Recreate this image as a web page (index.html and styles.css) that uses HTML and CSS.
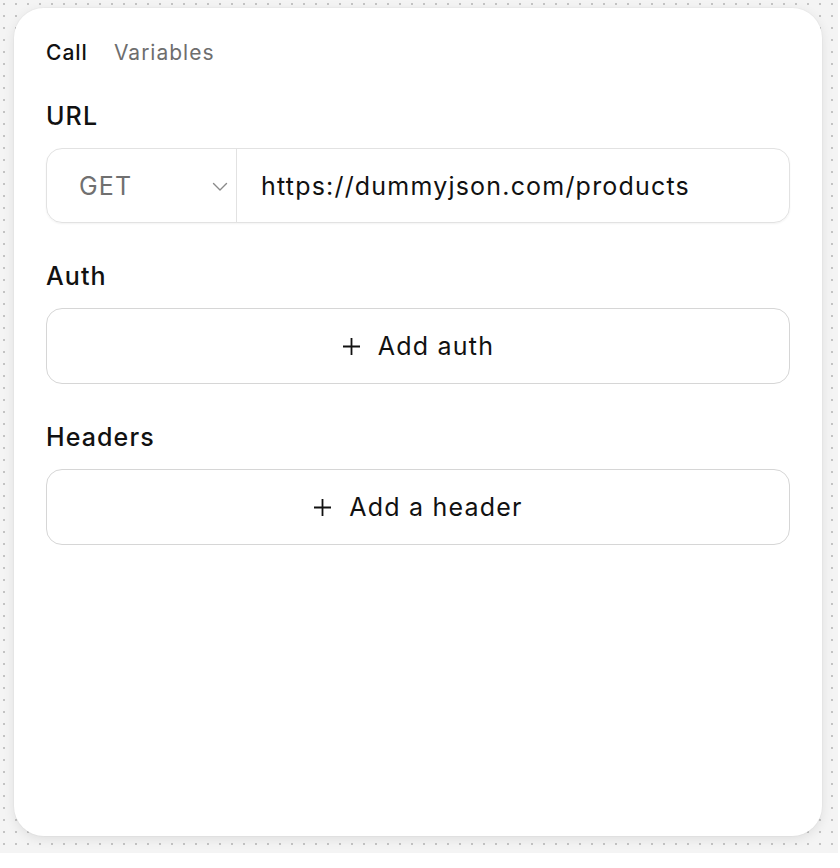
FILE: index.html
```html
<!doctype html>
<html>
<head>
  <title>Request</title>
  <link rel="stylesheet" href="styles.css">
</head>
<body>
<div class="canvas">
	<div class="panel">

		<nav class="tabs">
			<span class="tab tab-active">Call</span>
			<span class="tab">Variables</span>
		</nav>

		<section class="field">
			<div class="field-label">URL</div>
			<div class="url-group">
				<div class="method">
					<span>GET</span>
					<svg class="chevron" width="16" height="10" viewBox="0 0 16 10">
						<path d="M1.5 1.5 L8 8 L14.5 1.5" fill="none" stroke="#8a8a8a" stroke-width="1.4" stroke-linecap="round" stroke-linejoin="round"/>
					</svg>
				</div>
				<div class="url-input">https://dummyjson.com/products</div>
			</div>
		</section>

		<section class="field">
			<div class="field-label">Auth</div>
			<button class="add-btn">
				<svg class="plus" width="19" height="19" viewBox="0 0 19 19">
					<path d="M9.5 1 V18 M1 9.5 H18" stroke="#111" stroke-width="1.8"/>
				</svg>
				Add auth
			</button>
		</section>

		<section class="field">
			<div class="field-label">Headers</div>
			<button class="add-btn">
				<svg class="plus" width="19" height="19" viewBox="0 0 19 19">
					<path d="M9.5 1 V18 M1 9.5 H18" stroke="#111" stroke-width="1.8"/>
				</svg>
				Add a header
			</button>
		</section>

	</div>
</div>
</body>
</html>
```

FILE: styles.css
```css
*,
*:before,
*:after {
	box-sizing: border-box;
}

body {
	margin: 0;
	background: #fff;
	font-family: "Inter", "Liberation Sans", sans-serif;
	color: #111;
}

/* dotted work area behind the panel */
.canvas {
	width: 838px;
	height: 853px;
	padding: 8px 16px 0 14px;
	background-color: #f4f4f4;
	background-image: radial-gradient(circle, #c4c4c4 0.9px, transparent 1.3px);
	background-size: 12px 12px;
	background-position: -2px -2px;
}

.panel {
	width: 808px;
	height: 828px;
	padding: 33px 32px 0 32px;
	background: #fff;
	border-radius: 30px;
	box-shadow: 0 3px 12px rgba(0,0,0,0.09), 0 0 0 1px rgba(0,0,0,0.02);
}

.tabs {
	display: flex;
	gap: 26px;
	font-size: 21px;
	line-height: 24px;
	letter-spacing: 1px;
}

.tab {
	color: #6e6e6e;
	font-weight: 400;
}

.tab-active {
	color: #111;
	font-weight: 500;
}

.field {
	margin-top: 36px;
}

.field + .field {
	margin-top: 38px;
}

.field-label {
	font-size: 25px;
	line-height: 30px;
	font-weight: 500;
	letter-spacing: 1.1px;
	margin-bottom: 17px;
}

.url-group {
	display: flex;
	height: 75px;
	border: 1.5px solid #e2e2e2;
	border-radius: 16px;
	box-shadow: 0 1px 2px rgba(0,0,0,0.05);
	overflow: hidden;
}

.method {
	display: flex;
	align-items: center;
	justify-content: space-between;
	width: 190px;
	padding: 0 8px 0 32px;
	border-right: 1.5px solid #e2e2e2;
	font-size: 25px;
	letter-spacing: 1.2px;
	color: #707070;
}

.chevron {
	margin-top: 2px;
}

.url-input {
	display: flex;
	align-items: center;
	padding-left: 24px;
	font-size: 25px;
	letter-spacing: 1.2px;
	color: #111;
}

.add-btn {
	display: flex;
	align-items: center;
	justify-content: center;
	width: 100%;
	height: 76px;
	border: 1.5px solid #d6d6d6;
	border-radius: 16px;
	background: #fff;
	font-family: inherit;
	font-size: 25px;
	letter-spacing: 1.2px;
	color: #111;
}

.plus {
	margin-right: 17px;
}
```
